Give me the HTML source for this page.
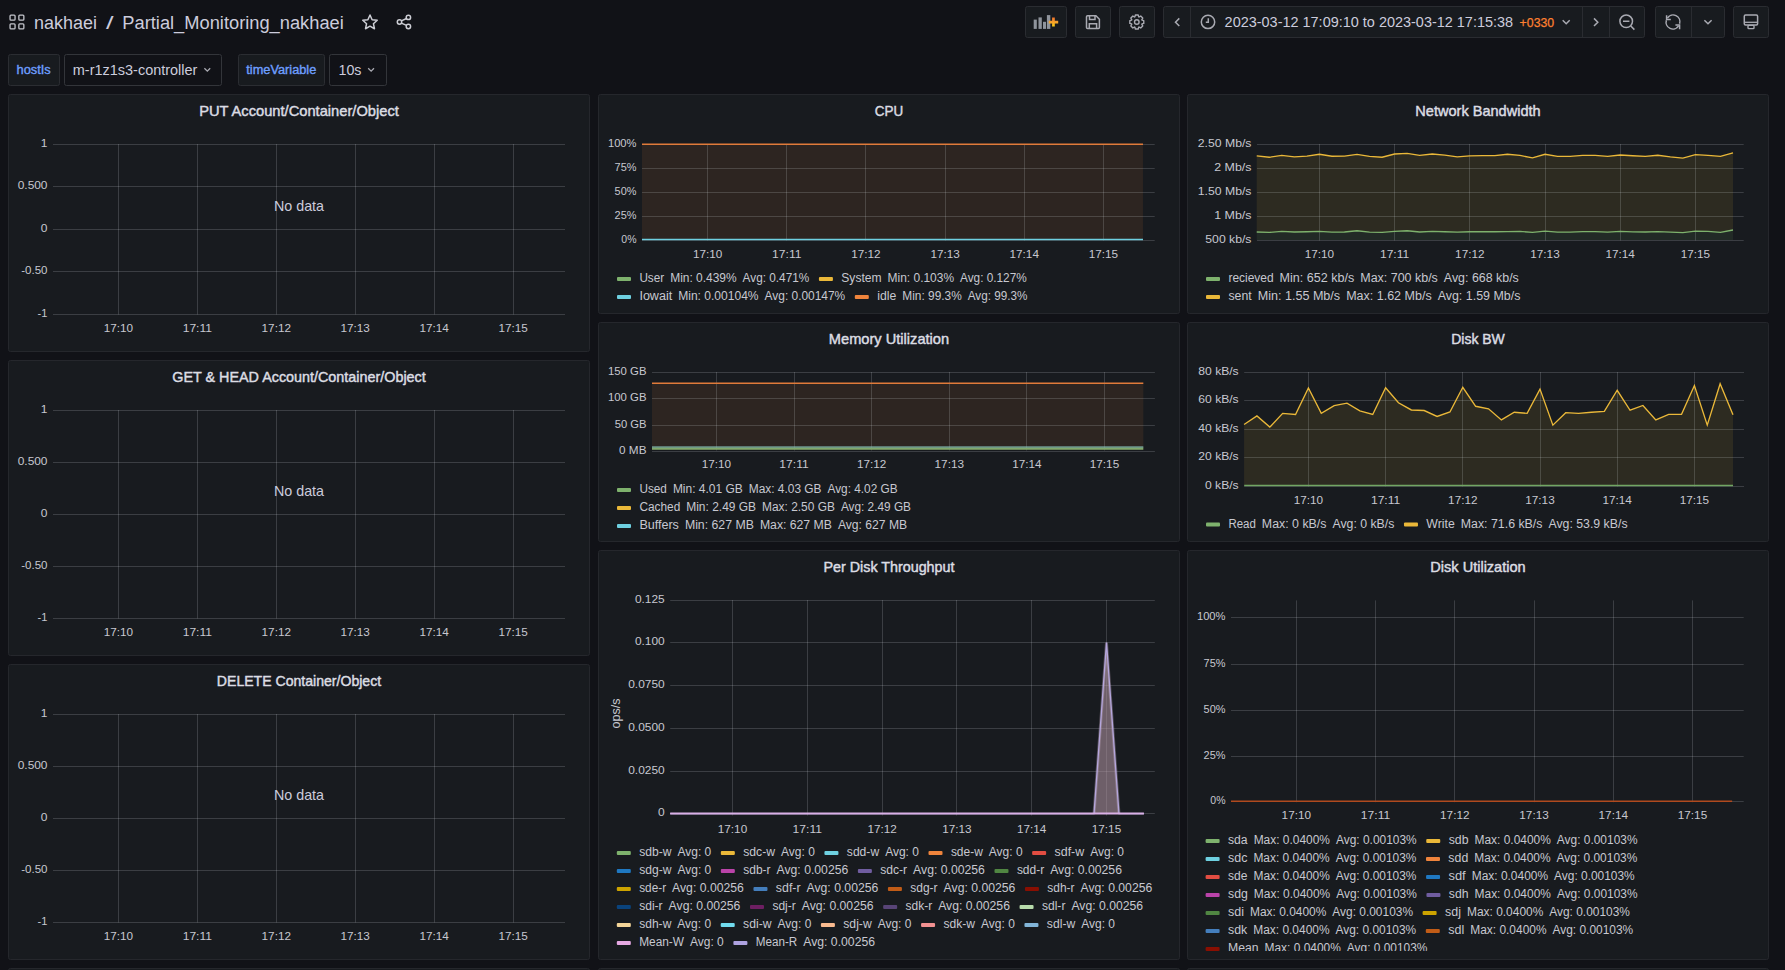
<!DOCTYPE html>
<html><head><meta charset="utf-8"><title>Partial_Monitoring_nakhaei - Grafana</title>
<style>html,body{margin:0;padding:0;background:#111217;overflow:hidden}svg{display:block}text{font-family:"Liberation Sans",sans-serif;white-space:pre}</style>
</head><body>
<svg width="1785" height="970" viewBox="0 0 1785 970">
<rect width="1785" height="970" fill="#111217"/>
<rect x="10.05" y="15.15" width="5.0" height="5.0" rx="0.9" fill="none" stroke="#c4c5cc" stroke-width="1.3"/>
<rect x="18.849999999999998" y="15.15" width="5.0" height="5.0" rx="0.9" fill="none" stroke="#c4c5cc" stroke-width="1.3"/>
<rect x="10.05" y="23.95" width="5.0" height="5.0" rx="0.9" fill="none" stroke="#c4c5cc" stroke-width="1.3"/>
<rect x="18.849999999999998" y="23.95" width="5.0" height="5.0" rx="0.9" fill="none" stroke="#c4c5cc" stroke-width="1.3"/>
<text x="34.00" y="29.40" font-size="18" fill="#ccccdc" text-anchor="start" textLength="63.00" lengthAdjust="spacingAndGlyphs" >nakhaei</text>
<text x="106.00" y="29.40" font-size="18" fill="#ccccdc" text-anchor="start" textLength="7.60" lengthAdjust="spacingAndGlyphs" >/</text>
<text x="122.30" y="29.40" font-size="18" fill="#ccccdc" text-anchor="start" textLength="221.50" lengthAdjust="spacingAndGlyphs" >Partial_Monitoring_nakhaei</text>
<polygon points="370.00,15.00 372.12,19.69 377.23,20.25 373.42,23.71 374.47,28.75 370.00,26.20 365.53,28.75 366.58,23.71 362.77,20.25 367.88,19.69" fill="none" stroke="#cdced5" stroke-width="1.5" stroke-linejoin="round"/>
<g fill="none" stroke="#cdced5" stroke-width="1.5"><circle cx="408.4" cy="17.4" r="2.2"/><circle cx="408.4" cy="26.5" r="2.2"/><circle cx="399.5" cy="22" r="2.2"/><line x1="401.4" y1="20.9" x2="406.5" y2="18.5"/><line x1="401.4" y1="23.1" x2="406.5" y2="25.4"/></g>
<rect x="1025.5" y="6.5" width="41" height="31" rx="2" fill="#181b1f" stroke="#2a2c31" stroke-width="1"/>
<rect x="1075.5" y="6.5" width="35" height="31" rx="2" fill="#181b1f" stroke="#2a2c31" stroke-width="1"/>
<rect x="1119.5" y="6.5" width="35" height="31" rx="2" fill="#181b1f" stroke="#2a2c31" stroke-width="1"/>
<rect x="1163.5" y="6.5" width="481" height="31" rx="2" fill="#181b1f" stroke="#2a2c31" stroke-width="1"/>
<rect x="1655.5" y="6.5" width="69" height="31" rx="2" fill="#181b1f" stroke="#2a2c31" stroke-width="1"/>
<rect x="1733.5" y="6.5" width="35" height="31" rx="2" fill="#181b1f" stroke="#2a2c31" stroke-width="1"/>
<line x1="1190.5" y1="6.5" x2="1190.5" y2="37.5" stroke="#2a2c31" stroke-width="1"/>
<line x1="1582.5" y1="6.5" x2="1582.5" y2="37.5" stroke="#2a2c31" stroke-width="1"/>
<line x1="1609.5" y1="6.5" x2="1609.5" y2="37.5" stroke="#2a2c31" stroke-width="1"/>
<line x1="1691.5" y1="6.5" x2="1691.5" y2="37.5" stroke="#2a2c31" stroke-width="1"/>
<rect x="1033.7" y="19.6" width="3.099999999999909" height="9.299999999999997" fill="#8f949c"/>
<rect x="1038.5" y="17.4" width="3.2999999999999545" height="11.5" fill="#8f949c"/>
<rect x="1043" y="21.8" width="3" height="7.099999999999998" fill="#8f949c"/>
<rect x="1046.9" y="15.1" width="3.3999999999998636" height="13.799999999999999" fill="#8f949c"/>
<defs><linearGradient id="plg" x1="0" y1="0" x2="0" y2="1"><stop offset="0" stop-color="#F0702A"/><stop offset="0.5" stop-color="#F7A12C"/><stop offset="1" stop-color="#FBD014"/></linearGradient></defs>
<path d="M1052.1 17.4h2.7v3.3h3.4v2.7h-3.4v3.2h-2.7v-3.2h-3.3v-2.7h3.3z" fill="url(#plg)"/>
<path d="M1087.5 15.8h8.5l3.4 3.4v8.3q0 1-1 1h-10.9q-1 0-1-1v-10.7q0-1 1-1z" fill="none" stroke="#a9aab2" stroke-width="1.5" stroke-linejoin="round"/>
<path d="M1089.5 16v3.6h5.5v-3.6M1089.3 28.3v-4.6h7.3v4.6" fill="none" stroke="#a9aab2" stroke-width="1.5"/>
<polygon points="1143.76,20.59 1143.76,23.41 1141.95,23.94 1141.81,24.27 1142.72,25.92 1140.72,27.92 1139.07,27.01 1138.74,27.15 1138.21,28.96 1135.39,28.96 1134.86,27.15 1134.53,27.01 1132.88,27.92 1130.88,25.92 1131.79,24.27 1131.65,23.94 1129.84,23.41 1129.84,20.59 1131.65,20.06 1131.79,19.73 1130.88,18.08 1132.88,16.08 1134.53,16.99 1134.86,16.85 1135.39,15.04 1138.21,15.04 1138.74,16.85 1139.07,16.99 1140.72,16.08 1142.72,18.08 1141.81,19.73 1141.95,20.06" fill="none" stroke="#a9aab2" stroke-width="1.4" stroke-linejoin="round"/>
<circle cx="1136.8" cy="22" r="2.3" fill="none" stroke="#a9aab2" stroke-width="1.4"/>
<path d="M1179.3 18.4l-3.8 3.8 3.8 3.8" fill="none" stroke="#a9aab2" stroke-width="1.5"/>
<circle cx="1208" cy="21.9" r="6.7" fill="none" stroke="#a9aab2" stroke-width="1.5"/><path d="M1208.3 18.2v4.1h-2.5" fill="none" stroke="#a9aab2" stroke-width="1.5"/>
<text x="1224.60" y="26.90" font-size="14" fill="#ccccdc" text-anchor="start" textLength="288.50" lengthAdjust="spacingAndGlyphs" >2023-03-12 17:09:10 to 2023-03-12 17:15:38</text>
<text x="1519.60" y="26.50" font-size="12.8" fill="#FF8030" stroke="#FF8030" stroke-width="0.25" text-anchor="start" textLength="34.60" lengthAdjust="spacingAndGlyphs" >+0330</text>
<path d="M1562.7 20.3l3.5 3.5 3.5-3.5" fill="none" stroke="#a9aab2" stroke-width="1.5"/>
<path d="M1594 18.4l3.8 3.8-3.8 3.8" fill="none" stroke="#a9aab2" stroke-width="1.5"/>
<circle cx="1626.2" cy="21.3" r="6.3" fill="none" stroke="#a9aab2" stroke-width="1.5"/><path d="M1623 21.3h6.4M1630.8 26l3.6 3.6" fill="none" stroke="#a9aab2" stroke-width="1.5"/>
<path d="M1667.4 18.1A6.8 6.8 0 0 1 1679.6 23.8M1678.6 25.9A6.8 6.8 0 0 1 1666.4 20.2" fill="none" stroke="#a9aab2" stroke-width="1.5"/>
<path d="M1666.6 15.2v4.2h4.2M1679.6 29.2v-4.3h-4.2" fill="none" stroke="#a9aab2" stroke-width="1.5"/>
<path d="M1704.4 20.2l3.6 3.6 3.6-3.6" fill="none" stroke="#a9aab2" stroke-width="1.5"/>
<rect x="1744.3" y="15" width="13.3" height="10" rx="1.2" fill="none" stroke="#a9aab2" stroke-width="1.5"/><path d="M1744.5 22.3h13" stroke="#a9aab2" stroke-width="1.3"/><rect x="1748" y="25.4" width="6" height="3.2" rx="0.8" fill="none" stroke="#a9aab2" stroke-width="1.4"/>
<rect x="8.5" y="54.5" width="51" height="31" rx="2" fill="#181b1f" stroke="#2b2d32" stroke-width="1"/>
<text x="16.50" y="74.20" font-size="12" fill="#6E9FFF" stroke="#6E9FFF" stroke-width="0.35" text-anchor="start" textLength="34.20" lengthAdjust="spacingAndGlyphs" >hostIs</text>
<rect x="64.5" y="54.5" width="157" height="31" rx="2" fill="#111217" stroke="#33353a" stroke-width="1"/>
<text x="72.80" y="74.80" font-size="14" fill="#ccccdc" text-anchor="start" textLength="124.60" lengthAdjust="spacingAndGlyphs" >m-r1z1s3-controller</text>
<path d="M204.4 68.2l2.9 2.9 2.9-2.9" fill="none" stroke="#a9aab2" stroke-width="1.3"/>
<rect x="238.5" y="54.5" width="86" height="31" rx="2" fill="#181b1f" stroke="#2b2d32" stroke-width="1"/>
<text x="246.30" y="74.20" font-size="12" fill="#6E9FFF" stroke="#6E9FFF" stroke-width="0.35" text-anchor="start" textLength="70.00" lengthAdjust="spacingAndGlyphs" >timeVariable</text>
<rect x="329.5" y="54.5" width="57" height="31" rx="2" fill="#111217" stroke="#33353a" stroke-width="1"/>
<text x="338.50" y="74.80" font-size="14" fill="#ccccdc" text-anchor="start" textLength="23.00" lengthAdjust="spacingAndGlyphs" >10s</text>
<path d="M368.2 68.2l2.9 2.9 2.9-2.9" fill="none" stroke="#a9aab2" stroke-width="1.3"/>
<rect x="8.5" y="94.5" width="581" height="257" rx="2" fill="#181b1f" stroke="#25272c" stroke-width="1"/>
<text x="299.00" y="116.00" font-size="15" fill="#dcdde3" stroke="#dcdde3" stroke-width="0.45" text-anchor="middle" textLength="199.62" lengthAdjust="spacingAndGlyphs" >PUT Account/Container/Object</text>
<line x1="53" y1="144.5" x2="565" y2="144.5" stroke="rgba(240,250,255,0.16)" stroke-width="1"/>
<text x="47.50" y="146.70" font-size="11.5" fill="#c7c8d0" text-anchor="end" textLength="6.68" lengthAdjust="spacingAndGlyphs" >1</text>
<line x1="53" y1="186.5" x2="565" y2="186.5" stroke="rgba(240,250,255,0.16)" stroke-width="1"/>
<text x="47.50" y="188.70" font-size="11.5" fill="#c7c8d0" text-anchor="end" textLength="29.79" lengthAdjust="spacingAndGlyphs" >0.500</text>
<line x1="53" y1="229.5" x2="565" y2="229.5" stroke="rgba(240,250,255,0.16)" stroke-width="1"/>
<text x="47.50" y="231.70" font-size="11.5" fill="#c7c8d0" text-anchor="end" textLength="6.68" lengthAdjust="spacingAndGlyphs" >0</text>
<line x1="53" y1="271.5" x2="565" y2="271.5" stroke="rgba(240,250,255,0.16)" stroke-width="1"/>
<text x="47.50" y="273.70" font-size="11.5" fill="#c7c8d0" text-anchor="end" textLength="26.32" lengthAdjust="spacingAndGlyphs" >-0.50</text>
<line x1="53" y1="314.5" x2="565" y2="314.5" stroke="rgba(240,250,255,0.16)" stroke-width="1"/>
<text x="47.50" y="316.70" font-size="11.5" fill="#c7c8d0" text-anchor="end" textLength="9.89" lengthAdjust="spacingAndGlyphs" >-1</text>
<line x1="118.5" y1="144" x2="118.5" y2="314.5" stroke="rgba(240,250,255,0.16)" stroke-width="1"/>
<text x="118.40" y="331.70" font-size="11.5" fill="#c7c8d0" text-anchor="middle" textLength="29.36" lengthAdjust="spacingAndGlyphs" >17:10</text>
<line x1="197.5" y1="144" x2="197.5" y2="314.5" stroke="rgba(240,250,255,0.16)" stroke-width="1"/>
<text x="197.34" y="331.70" font-size="11.5" fill="#c7c8d0" text-anchor="middle" textLength="29.36" lengthAdjust="spacingAndGlyphs" >17:11</text>
<line x1="276.5" y1="144" x2="276.5" y2="314.5" stroke="rgba(240,250,255,0.16)" stroke-width="1"/>
<text x="276.28" y="331.70" font-size="11.5" fill="#c7c8d0" text-anchor="middle" textLength="29.36" lengthAdjust="spacingAndGlyphs" >17:12</text>
<line x1="355.5" y1="144" x2="355.5" y2="314.5" stroke="rgba(240,250,255,0.16)" stroke-width="1"/>
<text x="355.22" y="331.70" font-size="11.5" fill="#c7c8d0" text-anchor="middle" textLength="29.36" lengthAdjust="spacingAndGlyphs" >17:13</text>
<line x1="434.5" y1="144" x2="434.5" y2="314.5" stroke="rgba(240,250,255,0.16)" stroke-width="1"/>
<text x="434.16" y="331.70" font-size="11.5" fill="#c7c8d0" text-anchor="middle" textLength="29.36" lengthAdjust="spacingAndGlyphs" >17:14</text>
<line x1="513.5" y1="144" x2="513.5" y2="314.5" stroke="rgba(240,250,255,0.16)" stroke-width="1"/>
<text x="513.10" y="331.70" font-size="11.5" fill="#c7c8d0" text-anchor="middle" textLength="29.36" lengthAdjust="spacingAndGlyphs" >17:15</text>
<text x="299.00" y="210.80" font-size="14.4" fill="#ccccdc" text-anchor="middle" textLength="50.00" lengthAdjust="spacingAndGlyphs" >No data</text>
<rect x="8.5" y="360.5" width="581" height="295" rx="2" fill="#181b1f" stroke="#25272c" stroke-width="1"/>
<text x="299.00" y="382.00" font-size="15" fill="#dcdde3" stroke="#dcdde3" stroke-width="0.45" text-anchor="middle" textLength="253.46" lengthAdjust="spacingAndGlyphs" >GET &amp; HEAD Account/Container/Object</text>
<line x1="53" y1="410.5" x2="565" y2="410.5" stroke="rgba(240,250,255,0.16)" stroke-width="1"/>
<text x="47.50" y="412.70" font-size="11.5" fill="#c7c8d0" text-anchor="end" textLength="6.68" lengthAdjust="spacingAndGlyphs" >1</text>
<line x1="53" y1="462.5" x2="565" y2="462.5" stroke="rgba(240,250,255,0.16)" stroke-width="1"/>
<text x="47.50" y="464.70" font-size="11.5" fill="#c7c8d0" text-anchor="end" textLength="29.79" lengthAdjust="spacingAndGlyphs" >0.500</text>
<line x1="53" y1="514.5" x2="565" y2="514.5" stroke="rgba(240,250,255,0.16)" stroke-width="1"/>
<text x="47.50" y="516.70" font-size="11.5" fill="#c7c8d0" text-anchor="end" textLength="6.68" lengthAdjust="spacingAndGlyphs" >0</text>
<line x1="53" y1="566.5" x2="565" y2="566.5" stroke="rgba(240,250,255,0.16)" stroke-width="1"/>
<text x="47.50" y="568.70" font-size="11.5" fill="#c7c8d0" text-anchor="end" textLength="26.32" lengthAdjust="spacingAndGlyphs" >-0.50</text>
<line x1="53" y1="618.5" x2="565" y2="618.5" stroke="rgba(240,250,255,0.16)" stroke-width="1"/>
<text x="47.50" y="620.70" font-size="11.5" fill="#c7c8d0" text-anchor="end" textLength="9.89" lengthAdjust="spacingAndGlyphs" >-1</text>
<line x1="118.5" y1="410" x2="118.5" y2="618.5" stroke="rgba(240,250,255,0.16)" stroke-width="1"/>
<text x="118.40" y="635.70" font-size="11.5" fill="#c7c8d0" text-anchor="middle" textLength="29.36" lengthAdjust="spacingAndGlyphs" >17:10</text>
<line x1="197.5" y1="410" x2="197.5" y2="618.5" stroke="rgba(240,250,255,0.16)" stroke-width="1"/>
<text x="197.34" y="635.70" font-size="11.5" fill="#c7c8d0" text-anchor="middle" textLength="29.36" lengthAdjust="spacingAndGlyphs" >17:11</text>
<line x1="276.5" y1="410" x2="276.5" y2="618.5" stroke="rgba(240,250,255,0.16)" stroke-width="1"/>
<text x="276.28" y="635.70" font-size="11.5" fill="#c7c8d0" text-anchor="middle" textLength="29.36" lengthAdjust="spacingAndGlyphs" >17:12</text>
<line x1="355.5" y1="410" x2="355.5" y2="618.5" stroke="rgba(240,250,255,0.16)" stroke-width="1"/>
<text x="355.22" y="635.70" font-size="11.5" fill="#c7c8d0" text-anchor="middle" textLength="29.36" lengthAdjust="spacingAndGlyphs" >17:13</text>
<line x1="434.5" y1="410" x2="434.5" y2="618.5" stroke="rgba(240,250,255,0.16)" stroke-width="1"/>
<text x="434.16" y="635.70" font-size="11.5" fill="#c7c8d0" text-anchor="middle" textLength="29.36" lengthAdjust="spacingAndGlyphs" >17:14</text>
<line x1="513.5" y1="410" x2="513.5" y2="618.5" stroke="rgba(240,250,255,0.16)" stroke-width="1"/>
<text x="513.10" y="635.70" font-size="11.5" fill="#c7c8d0" text-anchor="middle" textLength="29.36" lengthAdjust="spacingAndGlyphs" >17:15</text>
<text x="299.00" y="495.80" font-size="14.4" fill="#ccccdc" text-anchor="middle" textLength="50.00" lengthAdjust="spacingAndGlyphs" >No data</text>
<rect x="8.5" y="664.5" width="581" height="295" rx="2" fill="#181b1f" stroke="#25272c" stroke-width="1"/>
<text x="299.00" y="686.00" font-size="15" fill="#dcdde3" stroke="#dcdde3" stroke-width="0.45" text-anchor="middle" textLength="164.26" lengthAdjust="spacingAndGlyphs" >DELETE Container/Object</text>
<line x1="53" y1="714.5" x2="565" y2="714.5" stroke="rgba(240,250,255,0.16)" stroke-width="1"/>
<text x="47.50" y="716.70" font-size="11.5" fill="#c7c8d0" text-anchor="end" textLength="6.68" lengthAdjust="spacingAndGlyphs" >1</text>
<line x1="53" y1="766.5" x2="565" y2="766.5" stroke="rgba(240,250,255,0.16)" stroke-width="1"/>
<text x="47.50" y="768.70" font-size="11.5" fill="#c7c8d0" text-anchor="end" textLength="29.79" lengthAdjust="spacingAndGlyphs" >0.500</text>
<line x1="53" y1="818.5" x2="565" y2="818.5" stroke="rgba(240,250,255,0.16)" stroke-width="1"/>
<text x="47.50" y="820.70" font-size="11.5" fill="#c7c8d0" text-anchor="end" textLength="6.68" lengthAdjust="spacingAndGlyphs" >0</text>
<line x1="53" y1="870.5" x2="565" y2="870.5" stroke="rgba(240,250,255,0.16)" stroke-width="1"/>
<text x="47.50" y="872.70" font-size="11.5" fill="#c7c8d0" text-anchor="end" textLength="26.32" lengthAdjust="spacingAndGlyphs" >-0.50</text>
<line x1="53" y1="922.5" x2="565" y2="922.5" stroke="rgba(240,250,255,0.16)" stroke-width="1"/>
<text x="47.50" y="924.70" font-size="11.5" fill="#c7c8d0" text-anchor="end" textLength="9.89" lengthAdjust="spacingAndGlyphs" >-1</text>
<line x1="118.5" y1="714" x2="118.5" y2="922.5" stroke="rgba(240,250,255,0.16)" stroke-width="1"/>
<text x="118.40" y="939.70" font-size="11.5" fill="#c7c8d0" text-anchor="middle" textLength="29.36" lengthAdjust="spacingAndGlyphs" >17:10</text>
<line x1="197.5" y1="714" x2="197.5" y2="922.5" stroke="rgba(240,250,255,0.16)" stroke-width="1"/>
<text x="197.34" y="939.70" font-size="11.5" fill="#c7c8d0" text-anchor="middle" textLength="29.36" lengthAdjust="spacingAndGlyphs" >17:11</text>
<line x1="276.5" y1="714" x2="276.5" y2="922.5" stroke="rgba(240,250,255,0.16)" stroke-width="1"/>
<text x="276.28" y="939.70" font-size="11.5" fill="#c7c8d0" text-anchor="middle" textLength="29.36" lengthAdjust="spacingAndGlyphs" >17:12</text>
<line x1="355.5" y1="714" x2="355.5" y2="922.5" stroke="rgba(240,250,255,0.16)" stroke-width="1"/>
<text x="355.22" y="939.70" font-size="11.5" fill="#c7c8d0" text-anchor="middle" textLength="29.36" lengthAdjust="spacingAndGlyphs" >17:13</text>
<line x1="434.5" y1="714" x2="434.5" y2="922.5" stroke="rgba(240,250,255,0.16)" stroke-width="1"/>
<text x="434.16" y="939.70" font-size="11.5" fill="#c7c8d0" text-anchor="middle" textLength="29.36" lengthAdjust="spacingAndGlyphs" >17:14</text>
<line x1="513.5" y1="714" x2="513.5" y2="922.5" stroke="rgba(240,250,255,0.16)" stroke-width="1"/>
<text x="513.10" y="939.70" font-size="11.5" fill="#c7c8d0" text-anchor="middle" textLength="29.36" lengthAdjust="spacingAndGlyphs" >17:15</text>
<text x="299.00" y="799.80" font-size="14.4" fill="#ccccdc" text-anchor="middle" textLength="50.00" lengthAdjust="spacingAndGlyphs" >No data</text>
<rect x="8.5" y="968.5" width="581" height="39" rx="2" fill="#181b1f" stroke="#25272c" stroke-width="1"/>
<rect x="598.5" y="968.5" width="581" height="39" rx="2" fill="#181b1f" stroke="#25272c" stroke-width="1"/>
<rect x="1187.5" y="968.5" width="581" height="39" rx="2" fill="#181b1f" stroke="#25272c" stroke-width="1"/>
<rect x="598.5" y="94.5" width="581" height="219" rx="2" fill="#181b1f" stroke="#25272c" stroke-width="1"/>
<text x="889.00" y="116.00" font-size="15" fill="#dcdde3" stroke="#dcdde3" stroke-width="0.45" text-anchor="middle" textLength="28.37" lengthAdjust="spacingAndGlyphs" >CPU</text>
<rect x="642" y="144" width="500.98" height="96" fill="rgba(239,132,60,0.10)"/>
<line x1="642" y1="144.5" x2="1154.7" y2="144.5" stroke="rgba(240,250,255,0.16)" stroke-width="1"/>
<text x="636.50" y="146.70" font-size="11.5" fill="#c7c8d0" text-anchor="end" textLength="28.56" lengthAdjust="spacingAndGlyphs" >100%</text>
<line x1="642" y1="168.5" x2="1154.7" y2="168.5" stroke="rgba(240,250,255,0.16)" stroke-width="1"/>
<text x="636.50" y="170.70" font-size="11.5" fill="#c7c8d0" text-anchor="end" textLength="21.88" lengthAdjust="spacingAndGlyphs" >75%</text>
<line x1="642" y1="192.5" x2="1154.7" y2="192.5" stroke="rgba(240,250,255,0.16)" stroke-width="1"/>
<text x="636.50" y="194.70" font-size="11.5" fill="#c7c8d0" text-anchor="end" textLength="21.88" lengthAdjust="spacingAndGlyphs" >50%</text>
<line x1="642" y1="216.5" x2="1154.7" y2="216.5" stroke="rgba(240,250,255,0.16)" stroke-width="1"/>
<text x="636.50" y="218.70" font-size="11.5" fill="#c7c8d0" text-anchor="end" textLength="21.88" lengthAdjust="spacingAndGlyphs" >25%</text>
<line x1="642" y1="240.5" x2="1154.7" y2="240.5" stroke="rgba(240,250,255,0.16)" stroke-width="1"/>
<text x="636.50" y="242.70" font-size="11.5" fill="#c7c8d0" text-anchor="end" textLength="15.19" lengthAdjust="spacingAndGlyphs" >0%</text>
<line x1="707.5" y1="144" x2="707.5" y2="240.5" stroke="rgba(240,250,255,0.16)" stroke-width="1"/>
<text x="707.60" y="257.70" font-size="11.5" fill="#c7c8d0" text-anchor="middle" textLength="29.36" lengthAdjust="spacingAndGlyphs" >17:10</text>
<line x1="786.5" y1="144" x2="786.5" y2="240.5" stroke="rgba(240,250,255,0.16)" stroke-width="1"/>
<text x="786.76" y="257.70" font-size="11.5" fill="#c7c8d0" text-anchor="middle" textLength="29.36" lengthAdjust="spacingAndGlyphs" >17:11</text>
<line x1="865.5" y1="144" x2="865.5" y2="240.5" stroke="rgba(240,250,255,0.16)" stroke-width="1"/>
<text x="865.92" y="257.70" font-size="11.5" fill="#c7c8d0" text-anchor="middle" textLength="29.36" lengthAdjust="spacingAndGlyphs" >17:12</text>
<line x1="945.5" y1="144" x2="945.5" y2="240.5" stroke="rgba(240,250,255,0.16)" stroke-width="1"/>
<text x="945.08" y="257.70" font-size="11.5" fill="#c7c8d0" text-anchor="middle" textLength="29.36" lengthAdjust="spacingAndGlyphs" >17:13</text>
<line x1="1024.5" y1="144" x2="1024.5" y2="240.5" stroke="rgba(240,250,255,0.16)" stroke-width="1"/>
<text x="1024.24" y="257.70" font-size="11.5" fill="#c7c8d0" text-anchor="middle" textLength="29.36" lengthAdjust="spacingAndGlyphs" >17:14</text>
<line x1="1103.5" y1="144" x2="1103.5" y2="240.5" stroke="rgba(240,250,255,0.16)" stroke-width="1"/>
<text x="1103.40" y="257.70" font-size="11.5" fill="#c7c8d0" text-anchor="middle" textLength="29.36" lengthAdjust="spacingAndGlyphs" >17:15</text>
<line x1="642" y1="144.2" x2="1142.98" y2="144.2" stroke="#E07B3A" stroke-width="1.6"/>
<line x1="642" y1="239.5" x2="1142.98" y2="239.5" stroke="#6ED0E0" stroke-width="1.3"/>
<rect x="617.00" y="277" width="14" height="4" rx="1" fill="#7EB26D"/>
<text x="639.40" y="282.20" font-size="12" fill="#c7c8d0" text-anchor="start" textLength="24.78" lengthAdjust="spacingAndGlyphs" >User</text>
<text x="670.18" y="282.20" font-size="12" fill="#c7c8d0" text-anchor="start" textLength="66.42" lengthAdjust="spacingAndGlyphs" >Min: 0.439%</text>
<text x="742.60" y="282.20" font-size="12" fill="#c7c8d0" text-anchor="start" textLength="66.72" lengthAdjust="spacingAndGlyphs" >Avg: 0.471%</text>
<rect x="818.92" y="277" width="14" height="4" rx="1" fill="#EAB839"/>
<text x="841.32" y="282.20" font-size="12" fill="#c7c8d0" text-anchor="start" textLength="40.29" lengthAdjust="spacingAndGlyphs" >System</text>
<text x="887.61" y="282.20" font-size="12" fill="#c7c8d0" text-anchor="start" textLength="66.42" lengthAdjust="spacingAndGlyphs" >Min: 0.103%</text>
<text x="960.03" y="282.20" font-size="12" fill="#c7c8d0" text-anchor="start" textLength="66.72" lengthAdjust="spacingAndGlyphs" >Avg: 0.127%</text>
<rect x="617.00" y="295" width="14" height="4" rx="1" fill="#6ED0E0"/>
<text x="639.40" y="300.20" font-size="12" fill="#c7c8d0" text-anchor="start" textLength="32.83" lengthAdjust="spacingAndGlyphs" >Iowait</text>
<text x="678.23" y="300.20" font-size="12" fill="#c7c8d0" text-anchor="start" textLength="80.35" lengthAdjust="spacingAndGlyphs" >Min: 0.00104%</text>
<text x="764.58" y="300.20" font-size="12" fill="#c7c8d0" text-anchor="start" textLength="80.64" lengthAdjust="spacingAndGlyphs" >Avg: 0.00147%</text>
<rect x="854.82" y="295" width="14" height="4" rx="1" fill="#EF843C"/>
<text x="877.22" y="300.20" font-size="12" fill="#c7c8d0" text-anchor="start" textLength="19.08" lengthAdjust="spacingAndGlyphs" >idle</text>
<text x="902.31" y="300.20" font-size="12" fill="#c7c8d0" text-anchor="start" textLength="59.46" lengthAdjust="spacingAndGlyphs" >Min: 99.3%</text>
<text x="967.76" y="300.20" font-size="12" fill="#c7c8d0" text-anchor="start" textLength="59.75" lengthAdjust="spacingAndGlyphs" >Avg: 99.3%</text>
<rect x="1187.5" y="94.5" width="581" height="219" rx="2" fill="#181b1f" stroke="#25272c" stroke-width="1"/>
<text x="1478.00" y="116.00" font-size="15" fill="#dcdde3" stroke="#dcdde3" stroke-width="0.45" text-anchor="middle" textLength="125.34" lengthAdjust="spacingAndGlyphs" >Network Bandwidth</text>
<polygon points="1256.73,155.83 1269.27,157.23 1281.80,155.41 1294.33,156.81 1306.87,156.11 1319.40,154.29 1331.93,156.25 1344.47,156.11 1357.00,154.43 1369.53,156.39 1382.07,157.23 1394.60,154.01 1407.13,153.31 1419.67,155.41 1432.20,154.01 1444.73,155.13 1457.27,156.81 1469.80,155.83 1482.33,155.55 1494.87,155.55 1507.40,154.29 1519.93,155.43 1532.47,157.86 1545.00,154.29 1557.53,156.43 1570.07,156.43 1582.60,155.43 1595.13,155.43 1607.67,156.43 1620.20,155.00 1632.73,155.71 1645.27,156.43 1657.80,155.29 1670.33,156.86 1682.87,158.14 1695.40,154.57 1707.93,155.43 1720.47,156.43 1733.00,152.86 1733.00,230.00 1720.47,232.29 1707.93,231.43 1695.40,231.14 1682.87,232.57 1670.33,232.14 1657.80,231.57 1645.27,232.00 1632.73,231.86 1620.20,231.43 1607.67,232.14 1595.13,231.71 1582.60,231.71 1570.07,232.14 1557.53,232.14 1545.00,231.14 1532.47,232.43 1519.93,231.43 1507.40,231.71 1494.87,231.74 1482.33,231.74 1469.80,231.74 1457.27,232.16 1444.73,231.74 1432.20,231.32 1419.67,232.02 1407.13,230.76 1394.60,231.32 1382.07,232.44 1369.53,232.16 1357.00,230.76 1344.47,232.02 1331.93,232.16 1319.40,231.32 1306.87,231.74 1294.33,232.02 1281.80,231.46 1269.27,232.44 1256.73,232.02" fill="rgba(234,184,57,0.10)"/>
<polygon points="1256.73,232.02 1269.27,232.44 1281.80,231.46 1294.33,232.02 1306.87,231.74 1319.40,231.32 1331.93,232.16 1344.47,232.02 1357.00,230.76 1369.53,232.16 1382.07,232.44 1394.60,231.32 1407.13,230.76 1419.67,232.02 1432.20,231.32 1444.73,231.74 1457.27,232.16 1469.80,231.74 1482.33,231.74 1494.87,231.74 1507.40,231.71 1519.93,231.43 1532.47,232.43 1545.00,231.14 1557.53,232.14 1570.07,232.14 1582.60,231.71 1595.13,231.71 1607.67,232.14 1620.20,231.43 1632.73,231.86 1645.27,232.00 1657.80,231.57 1670.33,232.14 1682.87,232.57 1695.40,231.14 1707.93,231.43 1720.47,232.29 1733.00,230.00 1733.00,240 1256.73,240" fill="rgba(126,178,109,0.10)"/>
<line x1="1257" y1="144.5" x2="1743.7" y2="144.5" stroke="rgba(240,250,255,0.16)" stroke-width="1"/>
<text x="1251.50" y="146.70" font-size="11.5" fill="#c7c8d0" text-anchor="end" textLength="53.74" lengthAdjust="spacingAndGlyphs" >2.50 Mb/s</text>
<line x1="1257" y1="168.5" x2="1743.7" y2="168.5" stroke="rgba(240,250,255,0.16)" stroke-width="1"/>
<text x="1251.50" y="170.70" font-size="11.5" fill="#c7c8d0" text-anchor="end" textLength="37.31" lengthAdjust="spacingAndGlyphs" >2 Mb/s</text>
<line x1="1257" y1="192.5" x2="1743.7" y2="192.5" stroke="rgba(240,250,255,0.16)" stroke-width="1"/>
<text x="1251.50" y="194.70" font-size="11.5" fill="#c7c8d0" text-anchor="end" textLength="53.74" lengthAdjust="spacingAndGlyphs" >1.50 Mb/s</text>
<line x1="1257" y1="216.5" x2="1743.7" y2="216.5" stroke="rgba(240,250,255,0.16)" stroke-width="1"/>
<text x="1251.50" y="218.70" font-size="11.5" fill="#c7c8d0" text-anchor="end" textLength="37.31" lengthAdjust="spacingAndGlyphs" >1 Mb/s</text>
<line x1="1257" y1="240.5" x2="1743.7" y2="240.5" stroke="rgba(240,250,255,0.16)" stroke-width="1"/>
<text x="1251.50" y="242.70" font-size="11.5" fill="#c7c8d0" text-anchor="end" textLength="46.18" lengthAdjust="spacingAndGlyphs" >500 kb/s</text>
<line x1="1319.5" y1="144" x2="1319.5" y2="240.5" stroke="rgba(240,250,255,0.16)" stroke-width="1"/>
<text x="1319.40" y="257.70" font-size="11.5" fill="#c7c8d0" text-anchor="middle" textLength="29.36" lengthAdjust="spacingAndGlyphs" >17:10</text>
<line x1="1394.5" y1="144" x2="1394.5" y2="240.5" stroke="rgba(240,250,255,0.16)" stroke-width="1"/>
<text x="1394.60" y="257.70" font-size="11.5" fill="#c7c8d0" text-anchor="middle" textLength="29.36" lengthAdjust="spacingAndGlyphs" >17:11</text>
<line x1="1469.5" y1="144" x2="1469.5" y2="240.5" stroke="rgba(240,250,255,0.16)" stroke-width="1"/>
<text x="1469.80" y="257.70" font-size="11.5" fill="#c7c8d0" text-anchor="middle" textLength="29.36" lengthAdjust="spacingAndGlyphs" >17:12</text>
<line x1="1545.5" y1="144" x2="1545.5" y2="240.5" stroke="rgba(240,250,255,0.16)" stroke-width="1"/>
<text x="1545.00" y="257.70" font-size="11.5" fill="#c7c8d0" text-anchor="middle" textLength="29.36" lengthAdjust="spacingAndGlyphs" >17:13</text>
<line x1="1620.5" y1="144" x2="1620.5" y2="240.5" stroke="rgba(240,250,255,0.16)" stroke-width="1"/>
<text x="1620.20" y="257.70" font-size="11.5" fill="#c7c8d0" text-anchor="middle" textLength="29.36" lengthAdjust="spacingAndGlyphs" >17:14</text>
<line x1="1695.5" y1="144" x2="1695.5" y2="240.5" stroke="rgba(240,250,255,0.16)" stroke-width="1"/>
<text x="1695.40" y="257.70" font-size="11.5" fill="#c7c8d0" text-anchor="middle" textLength="29.36" lengthAdjust="spacingAndGlyphs" >17:15</text>
<polyline points="1256.73,232.02 1269.27,232.44 1281.80,231.46 1294.33,232.02 1306.87,231.74 1319.40,231.32 1331.93,232.16 1344.47,232.02 1357.00,230.76 1369.53,232.16 1382.07,232.44 1394.60,231.32 1407.13,230.76 1419.67,232.02 1432.20,231.32 1444.73,231.74 1457.27,232.16 1469.80,231.74 1482.33,231.74 1494.87,231.74 1507.40,231.71 1519.93,231.43 1532.47,232.43 1545.00,231.14 1557.53,232.14 1570.07,232.14 1582.60,231.71 1595.13,231.71 1607.67,232.14 1620.20,231.43 1632.73,231.86 1645.27,232.00 1657.80,231.57 1670.33,232.14 1682.87,232.57 1695.40,231.14 1707.93,231.43 1720.47,232.29 1733.00,230.00" fill="none" stroke="#7EB26D" stroke-width="1.3"/>
<polyline points="1256.73,155.83 1269.27,157.23 1281.80,155.41 1294.33,156.81 1306.87,156.11 1319.40,154.29 1331.93,156.25 1344.47,156.11 1357.00,154.43 1369.53,156.39 1382.07,157.23 1394.60,154.01 1407.13,153.31 1419.67,155.41 1432.20,154.01 1444.73,155.13 1457.27,156.81 1469.80,155.83 1482.33,155.55 1494.87,155.55 1507.40,154.29 1519.93,155.43 1532.47,157.86 1545.00,154.29 1557.53,156.43 1570.07,156.43 1582.60,155.43 1595.13,155.43 1607.67,156.43 1620.20,155.00 1632.73,155.71 1645.27,156.43 1657.80,155.29 1670.33,156.86 1682.87,158.14 1695.40,154.57 1707.93,155.43 1720.47,156.43 1733.00,152.86" fill="none" stroke="#EAB839" stroke-width="1.35"/>
<rect x="1206.00" y="277" width="14" height="4" rx="1" fill="#7EB26D"/>
<text x="1228.40" y="282.20" font-size="12" fill="#c7c8d0" text-anchor="start" textLength="45.23" lengthAdjust="spacingAndGlyphs" >recieved</text>
<text x="1279.63" y="282.20" font-size="12" fill="#c7c8d0" text-anchor="start" textLength="74.62" lengthAdjust="spacingAndGlyphs" >Min: 652 kb/s</text>
<text x="1360.26" y="282.20" font-size="12" fill="#c7c8d0" text-anchor="start" textLength="77.61" lengthAdjust="spacingAndGlyphs" >Max: 700 kb/s</text>
<text x="1443.87" y="282.20" font-size="12" fill="#c7c8d0" text-anchor="start" textLength="74.92" lengthAdjust="spacingAndGlyphs" >Avg: 668 kb/s</text>
<rect x="1206.00" y="295" width="14" height="4" rx="1" fill="#EAB839"/>
<text x="1228.40" y="300.20" font-size="12" fill="#c7c8d0" text-anchor="start" textLength="23.26" lengthAdjust="spacingAndGlyphs" >sent</text>
<text x="1257.66" y="300.20" font-size="12" fill="#c7c8d0" text-anchor="start" textLength="82.50" lengthAdjust="spacingAndGlyphs" >Min: 1.55 Mb/s</text>
<text x="1346.16" y="300.20" font-size="12" fill="#c7c8d0" text-anchor="start" textLength="85.49" lengthAdjust="spacingAndGlyphs" >Max: 1.62 Mb/s</text>
<text x="1437.65" y="300.20" font-size="12" fill="#c7c8d0" text-anchor="start" textLength="82.80" lengthAdjust="spacingAndGlyphs" >Avg: 1.59 Mb/s</text>
<rect x="598.5" y="322.5" width="581" height="219" rx="2" fill="#181b1f" stroke="#25272c" stroke-width="1"/>
<text x="889.00" y="344.00" font-size="15" fill="#dcdde3" stroke="#dcdde3" stroke-width="0.45" text-anchor="middle" textLength="120.29" lengthAdjust="spacingAndGlyphs" >Memory Utilization</text>
<rect x="652" y="383.3" width="491.31" height="66.70" fill="rgba(239,132,60,0.10)"/>
<line x1="652" y1="372.5" x2="1154.9" y2="372.5" stroke="rgba(240,250,255,0.16)" stroke-width="1"/>
<text x="646.50" y="374.70" font-size="11.5" fill="#c7c8d0" text-anchor="end" textLength="38.51" lengthAdjust="spacingAndGlyphs" >150 GB</text>
<line x1="652" y1="398.5" x2="1154.9" y2="398.5" stroke="rgba(240,250,255,0.16)" stroke-width="1"/>
<text x="646.50" y="400.70" font-size="11.5" fill="#c7c8d0" text-anchor="end" textLength="38.51" lengthAdjust="spacingAndGlyphs" >100 GB</text>
<line x1="652" y1="425.5" x2="1154.9" y2="425.5" stroke="rgba(240,250,255,0.16)" stroke-width="1"/>
<text x="646.50" y="427.70" font-size="11.5" fill="#c7c8d0" text-anchor="end" textLength="31.82" lengthAdjust="spacingAndGlyphs" >50 GB</text>
<line x1="652" y1="451.5" x2="1154.9" y2="451.5" stroke="rgba(240,250,255,0.16)" stroke-width="1"/>
<text x="646.50" y="453.70" font-size="11.5" fill="#c7c8d0" text-anchor="end" textLength="27.43" lengthAdjust="spacingAndGlyphs" >0 MB</text>
<line x1="716.5" y1="372" x2="716.5" y2="450.5" stroke="rgba(240,250,255,0.16)" stroke-width="1"/>
<text x="716.40" y="467.70" font-size="11.5" fill="#c7c8d0" text-anchor="middle" textLength="29.36" lengthAdjust="spacingAndGlyphs" >17:10</text>
<line x1="794.5" y1="372" x2="794.5" y2="450.5" stroke="rgba(240,250,255,0.16)" stroke-width="1"/>
<text x="794.02" y="467.70" font-size="11.5" fill="#c7c8d0" text-anchor="middle" textLength="29.36" lengthAdjust="spacingAndGlyphs" >17:11</text>
<line x1="871.5" y1="372" x2="871.5" y2="450.5" stroke="rgba(240,250,255,0.16)" stroke-width="1"/>
<text x="871.64" y="467.70" font-size="11.5" fill="#c7c8d0" text-anchor="middle" textLength="29.36" lengthAdjust="spacingAndGlyphs" >17:12</text>
<line x1="949.5" y1="372" x2="949.5" y2="450.5" stroke="rgba(240,250,255,0.16)" stroke-width="1"/>
<text x="949.26" y="467.70" font-size="11.5" fill="#c7c8d0" text-anchor="middle" textLength="29.36" lengthAdjust="spacingAndGlyphs" >17:13</text>
<line x1="1026.5" y1="372" x2="1026.5" y2="450.5" stroke="rgba(240,250,255,0.16)" stroke-width="1"/>
<text x="1026.88" y="467.70" font-size="11.5" fill="#c7c8d0" text-anchor="middle" textLength="29.36" lengthAdjust="spacingAndGlyphs" >17:14</text>
<line x1="1104.5" y1="372" x2="1104.5" y2="450.5" stroke="rgba(240,250,255,0.16)" stroke-width="1"/>
<text x="1104.50" y="467.70" font-size="11.5" fill="#c7c8d0" text-anchor="middle" textLength="29.36" lengthAdjust="spacingAndGlyphs" >17:15</text>
<line x1="652" y1="383.3" x2="1143.31" y2="383.3" stroke="#E07B3A" stroke-width="1.5"/>
<line x1="652" y1="448.6" x2="1143.31" y2="448.6" stroke="#7fa86c" stroke-width="2.4"/>
<line x1="652" y1="447" x2="1143.31" y2="447" stroke="#8ccdc4" stroke-width="1.1"/>
<rect x="617.00" y="488" width="14" height="4" rx="1" fill="#7EB26D"/>
<text x="639.40" y="493.20" font-size="12" fill="#c7c8d0" text-anchor="start" textLength="27.49" lengthAdjust="spacingAndGlyphs" >Used</text>
<text x="672.89" y="493.20" font-size="12" fill="#c7c8d0" text-anchor="start" textLength="69.82" lengthAdjust="spacingAndGlyphs" >Min: 4.01 GB</text>
<text x="748.72" y="493.20" font-size="12" fill="#c7c8d0" text-anchor="start" textLength="72.81" lengthAdjust="spacingAndGlyphs" >Max: 4.03 GB</text>
<text x="827.52" y="493.20" font-size="12" fill="#c7c8d0" text-anchor="start" textLength="70.12" lengthAdjust="spacingAndGlyphs" >Avg: 4.02 GB</text>
<rect x="617.00" y="506" width="14" height="4" rx="1" fill="#EAB839"/>
<text x="639.40" y="511.20" font-size="12" fill="#c7c8d0" text-anchor="start" textLength="40.86" lengthAdjust="spacingAndGlyphs" >Cached</text>
<text x="686.26" y="511.20" font-size="12" fill="#c7c8d0" text-anchor="start" textLength="69.82" lengthAdjust="spacingAndGlyphs" >Min: 2.49 GB</text>
<text x="762.08" y="511.20" font-size="12" fill="#c7c8d0" text-anchor="start" textLength="72.81" lengthAdjust="spacingAndGlyphs" >Max: 2.50 GB</text>
<text x="840.89" y="511.20" font-size="12" fill="#c7c8d0" text-anchor="start" textLength="70.12" lengthAdjust="spacingAndGlyphs" >Avg: 2.49 GB</text>
<rect x="617.00" y="524" width="14" height="4" rx="1" fill="#6ED0E0"/>
<text x="639.40" y="529.20" font-size="12" fill="#c7c8d0" text-anchor="start" textLength="39.50" lengthAdjust="spacingAndGlyphs" >Buffers</text>
<text x="684.90" y="529.20" font-size="12" fill="#c7c8d0" text-anchor="start" textLength="69.01" lengthAdjust="spacingAndGlyphs" >Min: 627 MB</text>
<text x="759.91" y="529.20" font-size="12" fill="#c7c8d0" text-anchor="start" textLength="72.00" lengthAdjust="spacingAndGlyphs" >Max: 627 MB</text>
<text x="837.91" y="529.20" font-size="12" fill="#c7c8d0" text-anchor="start" textLength="69.31" lengthAdjust="spacingAndGlyphs" >Avg: 627 MB</text>
<rect x="1187.5" y="322.5" width="581" height="219" rx="2" fill="#181b1f" stroke="#25272c" stroke-width="1"/>
<text x="1478.00" y="344.00" font-size="15" fill="#dcdde3" stroke="#dcdde3" stroke-width="0.45" text-anchor="middle" textLength="53.63" lengthAdjust="spacingAndGlyphs" >Disk BW</text>
<polygon points="1244.07,424.56 1256.93,415.92 1269.80,427.12 1282.67,413.37 1295.53,414.50 1308.40,387.99 1321.27,413.37 1334.13,405.57 1347.00,403.16 1359.87,410.81 1372.73,414.50 1385.60,387.71 1398.47,402.73 1411.33,409.96 1424.20,410.53 1437.07,416.48 1449.93,411.95 1462.80,387.28 1475.67,406.28 1488.53,408.83 1501.40,419.89 1514.27,412.23 1527.13,413.37 1540.00,389.13 1552.87,425.13 1565.73,412.66 1578.60,413.37 1591.47,412.23 1604.33,411.38 1617.20,390.26 1630.07,410.25 1642.93,405.43 1655.80,419.89 1668.67,414.36 1681.53,414.36 1694.40,385.58 1707.27,425.13 1720.13,383.74 1733.00,414.64 1733.00,485.8 1244.07,485.8" fill="rgba(234,184,57,0.10)"/>
<line x1="1244.2" y1="372.5" x2="1744" y2="372.5" stroke="rgba(240,250,255,0.16)" stroke-width="1"/>
<text x="1238.70" y="374.70" font-size="11.5" fill="#c7c8d0" text-anchor="end" textLength="40.39" lengthAdjust="spacingAndGlyphs" >80 kB/s</text>
<line x1="1244.2" y1="400.5" x2="1744" y2="400.5" stroke="rgba(240,250,255,0.16)" stroke-width="1"/>
<text x="1238.70" y="402.70" font-size="11.5" fill="#c7c8d0" text-anchor="end" textLength="40.39" lengthAdjust="spacingAndGlyphs" >60 kB/s</text>
<line x1="1244.2" y1="429.5" x2="1744" y2="429.5" stroke="rgba(240,250,255,0.16)" stroke-width="1"/>
<text x="1238.70" y="431.70" font-size="11.5" fill="#c7c8d0" text-anchor="end" textLength="40.39" lengthAdjust="spacingAndGlyphs" >40 kB/s</text>
<line x1="1244.2" y1="457.5" x2="1744" y2="457.5" stroke="rgba(240,250,255,0.16)" stroke-width="1"/>
<text x="1238.70" y="459.70" font-size="11.5" fill="#c7c8d0" text-anchor="end" textLength="40.39" lengthAdjust="spacingAndGlyphs" >20 kB/s</text>
<line x1="1244.2" y1="486.5" x2="1744" y2="486.5" stroke="rgba(240,250,255,0.16)" stroke-width="1"/>
<text x="1238.70" y="488.70" font-size="11.5" fill="#c7c8d0" text-anchor="end" textLength="33.71" lengthAdjust="spacingAndGlyphs" >0 kB/s</text>
<line x1="1308.5" y1="372" x2="1308.5" y2="486.5" stroke="rgba(240,250,255,0.16)" stroke-width="1"/>
<text x="1308.40" y="503.70" font-size="11.5" fill="#c7c8d0" text-anchor="middle" textLength="29.36" lengthAdjust="spacingAndGlyphs" >17:10</text>
<line x1="1385.5" y1="372" x2="1385.5" y2="486.5" stroke="rgba(240,250,255,0.16)" stroke-width="1"/>
<text x="1385.60" y="503.70" font-size="11.5" fill="#c7c8d0" text-anchor="middle" textLength="29.36" lengthAdjust="spacingAndGlyphs" >17:11</text>
<line x1="1462.5" y1="372" x2="1462.5" y2="486.5" stroke="rgba(240,250,255,0.16)" stroke-width="1"/>
<text x="1462.80" y="503.70" font-size="11.5" fill="#c7c8d0" text-anchor="middle" textLength="29.36" lengthAdjust="spacingAndGlyphs" >17:12</text>
<line x1="1540.5" y1="372" x2="1540.5" y2="486.5" stroke="rgba(240,250,255,0.16)" stroke-width="1"/>
<text x="1540.00" y="503.70" font-size="11.5" fill="#c7c8d0" text-anchor="middle" textLength="29.36" lengthAdjust="spacingAndGlyphs" >17:13</text>
<line x1="1617.5" y1="372" x2="1617.5" y2="486.5" stroke="rgba(240,250,255,0.16)" stroke-width="1"/>
<text x="1617.20" y="503.70" font-size="11.5" fill="#c7c8d0" text-anchor="middle" textLength="29.36" lengthAdjust="spacingAndGlyphs" >17:14</text>
<line x1="1694.5" y1="372" x2="1694.5" y2="486.5" stroke="rgba(240,250,255,0.16)" stroke-width="1"/>
<text x="1694.40" y="503.70" font-size="11.5" fill="#c7c8d0" text-anchor="middle" textLength="29.36" lengthAdjust="spacingAndGlyphs" >17:15</text>
<line x1="1244.2" y1="485.6" x2="1733.00" y2="485.6" stroke="#72A663" stroke-width="1.5"/>
<polyline points="1244.07,424.56 1256.93,415.92 1269.80,427.12 1282.67,413.37 1295.53,414.50 1308.40,387.99 1321.27,413.37 1334.13,405.57 1347.00,403.16 1359.87,410.81 1372.73,414.50 1385.60,387.71 1398.47,402.73 1411.33,409.96 1424.20,410.53 1437.07,416.48 1449.93,411.95 1462.80,387.28 1475.67,406.28 1488.53,408.83 1501.40,419.89 1514.27,412.23 1527.13,413.37 1540.00,389.13 1552.87,425.13 1565.73,412.66 1578.60,413.37 1591.47,412.23 1604.33,411.38 1617.20,390.26 1630.07,410.25 1642.93,405.43 1655.80,419.89 1668.67,414.36 1681.53,414.36 1694.40,385.58 1707.27,425.13 1720.13,383.74 1733.00,414.64" fill="none" stroke="#EAB839" stroke-width="1.35" stroke-linejoin="miter"/>
<rect x="1206.00" y="522.5" width="14" height="4" rx="1" fill="#7EB26D"/>
<text x="1228.40" y="527.70" font-size="12" fill="#c7c8d0" text-anchor="start" textLength="27.43" lengthAdjust="spacingAndGlyphs" >Read</text>
<text x="1261.83" y="527.70" font-size="12" fill="#c7c8d0" text-anchor="start" textLength="64.62" lengthAdjust="spacingAndGlyphs" >Max: 0 kB/s</text>
<text x="1332.45" y="527.70" font-size="12" fill="#c7c8d0" text-anchor="start" textLength="61.93" lengthAdjust="spacingAndGlyphs" >Avg: 0 kB/s</text>
<rect x="1403.98" y="522.5" width="14" height="4" rx="1" fill="#EAB839"/>
<text x="1426.38" y="527.70" font-size="12" fill="#c7c8d0" text-anchor="start" textLength="28.38" lengthAdjust="spacingAndGlyphs" >Write</text>
<text x="1460.76" y="527.70" font-size="12" fill="#c7c8d0" text-anchor="start" textLength="81.73" lengthAdjust="spacingAndGlyphs" >Max: 71.6 kB/s</text>
<text x="1548.49" y="527.70" font-size="12" fill="#c7c8d0" text-anchor="start" textLength="79.04" lengthAdjust="spacingAndGlyphs" >Avg: 53.9 kB/s</text>
<rect x="598.5" y="550.5" width="581" height="409" rx="2" fill="#181b1f" stroke="#25272c" stroke-width="1"/>
<text x="889.00" y="572.00" font-size="15" fill="#dcdde3" stroke="#dcdde3" stroke-width="0.45" text-anchor="middle" textLength="130.95" lengthAdjust="spacingAndGlyphs" >Per Disk Throughput</text>
<line x1="670.2" y1="600.5" x2="1154.8" y2="600.5" stroke="rgba(240,250,255,0.16)" stroke-width="1"/>
<text x="664.70" y="602.70" font-size="11.5" fill="#c7c8d0" text-anchor="end" textLength="29.79" lengthAdjust="spacingAndGlyphs" >0.125</text>
<line x1="670.2" y1="642.5" x2="1154.8" y2="642.5" stroke="rgba(240,250,255,0.16)" stroke-width="1"/>
<text x="664.70" y="644.70" font-size="11.5" fill="#c7c8d0" text-anchor="end" textLength="29.79" lengthAdjust="spacingAndGlyphs" >0.100</text>
<line x1="670.2" y1="685.5" x2="1154.8" y2="685.5" stroke="rgba(240,250,255,0.16)" stroke-width="1"/>
<text x="664.70" y="687.70" font-size="11.5" fill="#c7c8d0" text-anchor="end" textLength="36.47" lengthAdjust="spacingAndGlyphs" >0.0750</text>
<line x1="670.2" y1="728.5" x2="1154.8" y2="728.5" stroke="rgba(240,250,255,0.16)" stroke-width="1"/>
<text x="664.70" y="730.70" font-size="11.5" fill="#c7c8d0" text-anchor="end" textLength="36.47" lengthAdjust="spacingAndGlyphs" >0.0500</text>
<line x1="670.2" y1="771.5" x2="1154.8" y2="771.5" stroke="rgba(240,250,255,0.16)" stroke-width="1"/>
<text x="664.70" y="773.70" font-size="11.5" fill="#c7c8d0" text-anchor="end" textLength="36.47" lengthAdjust="spacingAndGlyphs" >0.0250</text>
<line x1="670.2" y1="813.5" x2="1154.8" y2="813.5" stroke="rgba(240,250,255,0.16)" stroke-width="1"/>
<text x="664.70" y="815.70" font-size="11.5" fill="#c7c8d0" text-anchor="end" textLength="6.68" lengthAdjust="spacingAndGlyphs" >0</text>
<line x1="732.5" y1="600" x2="732.5" y2="815.5" stroke="rgba(240,250,255,0.16)" stroke-width="1"/>
<text x="732.50" y="832.70" font-size="11.5" fill="#c7c8d0" text-anchor="middle" textLength="29.36" lengthAdjust="spacingAndGlyphs" >17:10</text>
<line x1="807.5" y1="600" x2="807.5" y2="815.5" stroke="rgba(240,250,255,0.16)" stroke-width="1"/>
<text x="807.30" y="832.70" font-size="11.5" fill="#c7c8d0" text-anchor="middle" textLength="29.36" lengthAdjust="spacingAndGlyphs" >17:11</text>
<line x1="882.5" y1="600" x2="882.5" y2="815.5" stroke="rgba(240,250,255,0.16)" stroke-width="1"/>
<text x="882.10" y="832.70" font-size="11.5" fill="#c7c8d0" text-anchor="middle" textLength="29.36" lengthAdjust="spacingAndGlyphs" >17:12</text>
<line x1="956.5" y1="600" x2="956.5" y2="815.5" stroke="rgba(240,250,255,0.16)" stroke-width="1"/>
<text x="956.90" y="832.70" font-size="11.5" fill="#c7c8d0" text-anchor="middle" textLength="29.36" lengthAdjust="spacingAndGlyphs" >17:13</text>
<line x1="1031.5" y1="600" x2="1031.5" y2="815.5" stroke="rgba(240,250,255,0.16)" stroke-width="1"/>
<text x="1031.70" y="832.70" font-size="11.5" fill="#c7c8d0" text-anchor="middle" textLength="29.36" lengthAdjust="spacingAndGlyphs" >17:14</text>
<line x1="1106.5" y1="600" x2="1106.5" y2="815.5" stroke="rgba(240,250,255,0.16)" stroke-width="1"/>
<text x="1106.50" y="832.70" font-size="11.5" fill="#c7c8d0" text-anchor="middle" textLength="29.36" lengthAdjust="spacingAndGlyphs" >17:15</text>
<polygon points="1094.03,813.8 1106.50,642.5 1118.97,813.8" fill="rgba(182,152,166,0.55)"/>
<polyline points="1094.03,813.6 1106.50,642.5 1118.97,813.6" fill="none" stroke="rgba(200,175,200,0.35)" stroke-width="3"/>
<polyline points="670.2,813.6 1094.03,813.6 1106.50,642.5 1118.97,813.6 1143.90,813.6" fill="none" stroke="#b4a6dc" stroke-width="1.3"/>
<line x1="670.2" y1="813.6" x2="1143.90" y2="813.6" stroke="#d9b0e6" stroke-width="2"/>
<text x="0" y="0" font-size="12" fill="#c7c8d0" text-anchor="middle" transform="translate(619.6 713.4) rotate(-90)" textLength="30" lengthAdjust="spacingAndGlyphs">ops/s</text>
<rect x="616.80" y="851" width="14" height="4" rx="1" fill="#7EB26D"/>
<text x="639.20" y="856.20" font-size="12" fill="#c7c8d0" text-anchor="start" textLength="32.28" lengthAdjust="spacingAndGlyphs" >sdb-w</text>
<text x="677.48" y="856.20" font-size="12" fill="#c7c8d0" text-anchor="start" textLength="33.77" lengthAdjust="spacingAndGlyphs" >Avg: 0</text>
<rect x="720.84" y="851" width="14" height="4" rx="1" fill="#EAB839"/>
<text x="743.24" y="856.20" font-size="12" fill="#c7c8d0" text-anchor="start" textLength="31.82" lengthAdjust="spacingAndGlyphs" >sdc-w</text>
<text x="781.06" y="856.20" font-size="12" fill="#c7c8d0" text-anchor="start" textLength="33.77" lengthAdjust="spacingAndGlyphs" >Avg: 0</text>
<rect x="824.43" y="851" width="14" height="4" rx="1" fill="#6ED0E0"/>
<text x="846.83" y="856.20" font-size="12" fill="#c7c8d0" text-anchor="start" textLength="32.30" lengthAdjust="spacingAndGlyphs" >sdd-w</text>
<text x="885.13" y="856.20" font-size="12" fill="#c7c8d0" text-anchor="start" textLength="33.77" lengthAdjust="spacingAndGlyphs" >Avg: 0</text>
<rect x="928.50" y="851" width="14" height="4" rx="1" fill="#EF843C"/>
<text x="950.90" y="856.20" font-size="12" fill="#c7c8d0" text-anchor="start" textLength="31.89" lengthAdjust="spacingAndGlyphs" >sde-w</text>
<text x="988.79" y="856.20" font-size="12" fill="#c7c8d0" text-anchor="start" textLength="33.77" lengthAdjust="spacingAndGlyphs" >Avg: 0</text>
<rect x="1032.15" y="851" width="14" height="4" rx="1" fill="#E24D42"/>
<text x="1054.55" y="856.20" font-size="12" fill="#c7c8d0" text-anchor="start" textLength="29.68" lengthAdjust="spacingAndGlyphs" >sdf-w</text>
<text x="1090.23" y="856.20" font-size="12" fill="#c7c8d0" text-anchor="start" textLength="33.77" lengthAdjust="spacingAndGlyphs" >Avg: 0</text>
<rect x="616.80" y="869" width="14" height="4" rx="1" fill="#1F78C1"/>
<text x="639.20" y="874.20" font-size="12" fill="#c7c8d0" text-anchor="start" textLength="32.27" lengthAdjust="spacingAndGlyphs" >sdg-w</text>
<text x="677.47" y="874.20" font-size="12" fill="#c7c8d0" text-anchor="start" textLength="33.77" lengthAdjust="spacingAndGlyphs" >Avg: 0</text>
<rect x="720.84" y="869" width="14" height="4" rx="1" fill="#BA43A9"/>
<text x="743.24" y="874.20" font-size="12" fill="#c7c8d0" text-anchor="start" textLength="27.28" lengthAdjust="spacingAndGlyphs" >sdb-r</text>
<text x="776.52" y="874.20" font-size="12" fill="#c7c8d0" text-anchor="start" textLength="71.77" lengthAdjust="spacingAndGlyphs" >Avg: 0.00256</text>
<rect x="857.89" y="869" width="14" height="4" rx="1" fill="#705DA0"/>
<text x="880.29" y="874.20" font-size="12" fill="#c7c8d0" text-anchor="start" textLength="26.82" lengthAdjust="spacingAndGlyphs" >sdc-r</text>
<text x="913.12" y="874.20" font-size="12" fill="#c7c8d0" text-anchor="start" textLength="71.77" lengthAdjust="spacingAndGlyphs" >Avg: 0.00256</text>
<rect x="994.49" y="869" width="14" height="4" rx="1" fill="#508642"/>
<text x="1016.89" y="874.20" font-size="12" fill="#c7c8d0" text-anchor="start" textLength="27.31" lengthAdjust="spacingAndGlyphs" >sdd-r</text>
<text x="1050.19" y="874.20" font-size="12" fill="#c7c8d0" text-anchor="start" textLength="71.77" lengthAdjust="spacingAndGlyphs" >Avg: 0.00256</text>
<rect x="616.80" y="887" width="14" height="4" rx="1" fill="#CCA300"/>
<text x="639.20" y="892.20" font-size="12" fill="#c7c8d0" text-anchor="start" textLength="26.89" lengthAdjust="spacingAndGlyphs" >sde-r</text>
<text x="672.09" y="892.20" font-size="12" fill="#c7c8d0" text-anchor="start" textLength="71.77" lengthAdjust="spacingAndGlyphs" >Avg: 0.00256</text>
<rect x="753.47" y="887" width="14" height="4" rx="1" fill="#447EBC"/>
<text x="775.87" y="892.20" font-size="12" fill="#c7c8d0" text-anchor="start" textLength="24.68" lengthAdjust="spacingAndGlyphs" >sdf-r</text>
<text x="806.55" y="892.20" font-size="12" fill="#c7c8d0" text-anchor="start" textLength="71.77" lengthAdjust="spacingAndGlyphs" >Avg: 0.00256</text>
<rect x="887.92" y="887" width="14" height="4" rx="1" fill="#C15C17"/>
<text x="910.32" y="892.20" font-size="12" fill="#c7c8d0" text-anchor="start" textLength="27.28" lengthAdjust="spacingAndGlyphs" >sdg-r</text>
<text x="943.60" y="892.20" font-size="12" fill="#c7c8d0" text-anchor="start" textLength="71.77" lengthAdjust="spacingAndGlyphs" >Avg: 0.00256</text>
<rect x="1024.97" y="887" width="14" height="4" rx="1" fill="#890F02"/>
<text x="1047.37" y="892.20" font-size="12" fill="#c7c8d0" text-anchor="start" textLength="27.16" lengthAdjust="spacingAndGlyphs" >sdh-r</text>
<text x="1080.53" y="892.20" font-size="12" fill="#c7c8d0" text-anchor="start" textLength="71.77" lengthAdjust="spacingAndGlyphs" >Avg: 0.00256</text>
<rect x="616.80" y="905" width="14" height="4" rx="1" fill="#0A437C"/>
<text x="639.20" y="910.20" font-size="12" fill="#c7c8d0" text-anchor="start" textLength="23.43" lengthAdjust="spacingAndGlyphs" >sdi-r</text>
<text x="668.63" y="910.20" font-size="12" fill="#c7c8d0" text-anchor="start" textLength="71.77" lengthAdjust="spacingAndGlyphs" >Avg: 0.00256</text>
<rect x="750.00" y="905" width="14" height="4" rx="1" fill="#6D1F62"/>
<text x="772.40" y="910.20" font-size="12" fill="#c7c8d0" text-anchor="start" textLength="23.38" lengthAdjust="spacingAndGlyphs" >sdj-r</text>
<text x="801.79" y="910.20" font-size="12" fill="#c7c8d0" text-anchor="start" textLength="71.77" lengthAdjust="spacingAndGlyphs" >Avg: 0.00256</text>
<rect x="883.16" y="905" width="14" height="4" rx="1" fill="#584477"/>
<text x="905.56" y="910.20" font-size="12" fill="#c7c8d0" text-anchor="start" textLength="26.63" lengthAdjust="spacingAndGlyphs" >sdk-r</text>
<text x="938.19" y="910.20" font-size="12" fill="#c7c8d0" text-anchor="start" textLength="71.77" lengthAdjust="spacingAndGlyphs" >Avg: 0.00256</text>
<rect x="1019.57" y="905" width="14" height="4" rx="1" fill="#B7DBAB"/>
<text x="1041.97" y="910.20" font-size="12" fill="#c7c8d0" text-anchor="start" textLength="23.43" lengthAdjust="spacingAndGlyphs" >sdl-r</text>
<text x="1071.40" y="910.20" font-size="12" fill="#c7c8d0" text-anchor="start" textLength="71.77" lengthAdjust="spacingAndGlyphs" >Avg: 0.00256</text>
<rect x="616.80" y="923" width="14" height="4" rx="1" fill="#F4D598"/>
<text x="639.20" y="928.20" font-size="12" fill="#c7c8d0" text-anchor="start" textLength="32.15" lengthAdjust="spacingAndGlyphs" >sdh-w</text>
<text x="677.35" y="928.20" font-size="12" fill="#c7c8d0" text-anchor="start" textLength="33.77" lengthAdjust="spacingAndGlyphs" >Avg: 0</text>
<rect x="720.72" y="923" width="14" height="4" rx="1" fill="#70DBED"/>
<text x="743.12" y="928.20" font-size="12" fill="#c7c8d0" text-anchor="start" textLength="28.43" lengthAdjust="spacingAndGlyphs" >sdi-w</text>
<text x="777.54" y="928.20" font-size="12" fill="#c7c8d0" text-anchor="start" textLength="33.77" lengthAdjust="spacingAndGlyphs" >Avg: 0</text>
<rect x="820.91" y="923" width="14" height="4" rx="1" fill="#F9BA8F"/>
<text x="843.31" y="928.20" font-size="12" fill="#c7c8d0" text-anchor="start" textLength="28.38" lengthAdjust="spacingAndGlyphs" >sdj-w</text>
<text x="877.69" y="928.20" font-size="12" fill="#c7c8d0" text-anchor="start" textLength="33.77" lengthAdjust="spacingAndGlyphs" >Avg: 0</text>
<rect x="921.06" y="923" width="14" height="4" rx="1" fill="#F29191"/>
<text x="943.46" y="928.20" font-size="12" fill="#c7c8d0" text-anchor="start" textLength="31.63" lengthAdjust="spacingAndGlyphs" >sdk-w</text>
<text x="981.09" y="928.20" font-size="12" fill="#c7c8d0" text-anchor="start" textLength="33.77" lengthAdjust="spacingAndGlyphs" >Avg: 0</text>
<rect x="1024.45" y="923" width="14" height="4" rx="1" fill="#82B5D8"/>
<text x="1046.85" y="928.20" font-size="12" fill="#c7c8d0" text-anchor="start" textLength="28.43" lengthAdjust="spacingAndGlyphs" >sdl-w</text>
<text x="1081.28" y="928.20" font-size="12" fill="#c7c8d0" text-anchor="start" textLength="33.77" lengthAdjust="spacingAndGlyphs" >Avg: 0</text>
<rect x="616.80" y="941" width="14" height="4" rx="1" fill="#E5A8E2"/>
<text x="639.20" y="946.20" font-size="12" fill="#c7c8d0" text-anchor="start" textLength="44.83" lengthAdjust="spacingAndGlyphs" >Mean-W</text>
<text x="690.03" y="946.20" font-size="12" fill="#c7c8d0" text-anchor="start" textLength="33.77" lengthAdjust="spacingAndGlyphs" >Avg: 0</text>
<rect x="733.40" y="941" width="14" height="4" rx="1" fill="#AEA2E0"/>
<text x="755.80" y="946.20" font-size="12" fill="#c7c8d0" text-anchor="start" textLength="41.46" lengthAdjust="spacingAndGlyphs" >Mean-R</text>
<text x="803.26" y="946.20" font-size="12" fill="#c7c8d0" text-anchor="start" textLength="71.77" lengthAdjust="spacingAndGlyphs" >Avg: 0.00256</text>
<rect x="1187.5" y="550.5" width="581" height="409" rx="2" fill="#181b1f" stroke="#25272c" stroke-width="1"/>
<text x="1478.00" y="572.00" font-size="15" fill="#dcdde3" stroke="#dcdde3" stroke-width="0.45" text-anchor="middle" textLength="95.27" lengthAdjust="spacingAndGlyphs" >Disk Utilization</text>
<line x1="1231" y1="617.5" x2="1743.7" y2="617.5" stroke="rgba(240,250,255,0.16)" stroke-width="1"/>
<text x="1225.50" y="619.70" font-size="11.5" fill="#c7c8d0" text-anchor="end" textLength="28.56" lengthAdjust="spacingAndGlyphs" >100%</text>
<line x1="1231" y1="664.5" x2="1743.7" y2="664.5" stroke="rgba(240,250,255,0.16)" stroke-width="1"/>
<text x="1225.50" y="666.70" font-size="11.5" fill="#c7c8d0" text-anchor="end" textLength="21.88" lengthAdjust="spacingAndGlyphs" >75%</text>
<line x1="1231" y1="710.5" x2="1743.7" y2="710.5" stroke="rgba(240,250,255,0.16)" stroke-width="1"/>
<text x="1225.50" y="712.70" font-size="11.5" fill="#c7c8d0" text-anchor="end" textLength="21.88" lengthAdjust="spacingAndGlyphs" >50%</text>
<line x1="1231" y1="756.5" x2="1743.7" y2="756.5" stroke="rgba(240,250,255,0.16)" stroke-width="1"/>
<text x="1225.50" y="758.70" font-size="11.5" fill="#c7c8d0" text-anchor="end" textLength="21.88" lengthAdjust="spacingAndGlyphs" >25%</text>
<line x1="1231" y1="801.5" x2="1743.7" y2="801.5" stroke="rgba(240,250,255,0.16)" stroke-width="1"/>
<text x="1225.50" y="803.70" font-size="11.5" fill="#c7c8d0" text-anchor="end" textLength="15.19" lengthAdjust="spacingAndGlyphs" >0%</text>
<line x1="1296.5" y1="600.4" x2="1296.5" y2="802.2" stroke="rgba(240,250,255,0.16)" stroke-width="1"/>
<text x="1296.30" y="819.40" font-size="11.5" fill="#c7c8d0" text-anchor="middle" textLength="29.36" lengthAdjust="spacingAndGlyphs" >17:10</text>
<line x1="1375.5" y1="600.4" x2="1375.5" y2="802.2" stroke="rgba(240,250,255,0.16)" stroke-width="1"/>
<text x="1375.54" y="819.40" font-size="11.5" fill="#c7c8d0" text-anchor="middle" textLength="29.36" lengthAdjust="spacingAndGlyphs" >17:11</text>
<line x1="1454.5" y1="600.4" x2="1454.5" y2="802.2" stroke="rgba(240,250,255,0.16)" stroke-width="1"/>
<text x="1454.78" y="819.40" font-size="11.5" fill="#c7c8d0" text-anchor="middle" textLength="29.36" lengthAdjust="spacingAndGlyphs" >17:12</text>
<line x1="1534.5" y1="600.4" x2="1534.5" y2="802.2" stroke="rgba(240,250,255,0.16)" stroke-width="1"/>
<text x="1534.02" y="819.40" font-size="11.5" fill="#c7c8d0" text-anchor="middle" textLength="29.36" lengthAdjust="spacingAndGlyphs" >17:13</text>
<line x1="1613.5" y1="600.4" x2="1613.5" y2="802.2" stroke="rgba(240,250,255,0.16)" stroke-width="1"/>
<text x="1613.26" y="819.40" font-size="11.5" fill="#c7c8d0" text-anchor="middle" textLength="29.36" lengthAdjust="spacingAndGlyphs" >17:14</text>
<line x1="1692.5" y1="600.4" x2="1692.5" y2="802.2" stroke="rgba(240,250,255,0.16)" stroke-width="1"/>
<text x="1692.50" y="819.40" font-size="11.5" fill="#c7c8d0" text-anchor="middle" textLength="29.36" lengthAdjust="spacingAndGlyphs" >17:15</text>
<line x1="1231" y1="801.3" x2="1732.12" y2="801.3" stroke="#B04A1E" stroke-width="1.6"/>
<clipPath id="duclip"><rect x="1188" y="828" width="580" height="123"/></clipPath><g clip-path="url(#duclip)">
<rect x="1205.60" y="839" width="14" height="4" rx="1" fill="#7EB26D"/>
<text x="1228.00" y="844.20" font-size="12" fill="#c7c8d0" text-anchor="start" textLength="19.64" lengthAdjust="spacingAndGlyphs" >sda</text>
<text x="1253.64" y="844.20" font-size="12" fill="#c7c8d0" text-anchor="start" textLength="76.37" lengthAdjust="spacingAndGlyphs" >Max: 0.0400%</text>
<text x="1336.01" y="844.20" font-size="12" fill="#c7c8d0" text-anchor="start" textLength="80.64" lengthAdjust="spacingAndGlyphs" >Avg: 0.00103%</text>
<rect x="1426.25" y="839" width="14" height="4" rx="1" fill="#EAB839"/>
<text x="1448.65" y="844.20" font-size="12" fill="#c7c8d0" text-anchor="start" textLength="19.84" lengthAdjust="spacingAndGlyphs" >sdb</text>
<text x="1474.49" y="844.20" font-size="12" fill="#c7c8d0" text-anchor="start" textLength="76.37" lengthAdjust="spacingAndGlyphs" >Max: 0.0400%</text>
<text x="1556.86" y="844.20" font-size="12" fill="#c7c8d0" text-anchor="start" textLength="80.64" lengthAdjust="spacingAndGlyphs" >Avg: 0.00103%</text>
<rect x="1205.60" y="857" width="14" height="4" rx="1" fill="#6ED0E0"/>
<text x="1228.00" y="862.20" font-size="12" fill="#c7c8d0" text-anchor="start" textLength="19.38" lengthAdjust="spacingAndGlyphs" >sdc</text>
<text x="1253.38" y="862.20" font-size="12" fill="#c7c8d0" text-anchor="start" textLength="76.37" lengthAdjust="spacingAndGlyphs" >Max: 0.0400%</text>
<text x="1335.75" y="862.20" font-size="12" fill="#c7c8d0" text-anchor="start" textLength="80.64" lengthAdjust="spacingAndGlyphs" >Avg: 0.00103%</text>
<rect x="1425.99" y="857" width="14" height="4" rx="1" fill="#EF843C"/>
<text x="1448.39" y="862.20" font-size="12" fill="#c7c8d0" text-anchor="start" textLength="19.87" lengthAdjust="spacingAndGlyphs" >sdd</text>
<text x="1474.26" y="862.20" font-size="12" fill="#c7c8d0" text-anchor="start" textLength="76.37" lengthAdjust="spacingAndGlyphs" >Max: 0.0400%</text>
<text x="1556.62" y="862.20" font-size="12" fill="#c7c8d0" text-anchor="start" textLength="80.64" lengthAdjust="spacingAndGlyphs" >Avg: 0.00103%</text>
<rect x="1205.60" y="875" width="14" height="4" rx="1" fill="#E24D42"/>
<text x="1228.00" y="880.20" font-size="12" fill="#c7c8d0" text-anchor="start" textLength="19.45" lengthAdjust="spacingAndGlyphs" >sde</text>
<text x="1253.45" y="880.20" font-size="12" fill="#c7c8d0" text-anchor="start" textLength="76.37" lengthAdjust="spacingAndGlyphs" >Max: 0.0400%</text>
<text x="1335.82" y="880.20" font-size="12" fill="#c7c8d0" text-anchor="start" textLength="80.64" lengthAdjust="spacingAndGlyphs" >Avg: 0.00103%</text>
<rect x="1426.06" y="875" width="14" height="4" rx="1" fill="#1F78C1"/>
<text x="1448.46" y="880.20" font-size="12" fill="#c7c8d0" text-anchor="start" textLength="17.24" lengthAdjust="spacingAndGlyphs" >sdf</text>
<text x="1471.71" y="880.20" font-size="12" fill="#c7c8d0" text-anchor="start" textLength="76.37" lengthAdjust="spacingAndGlyphs" >Max: 0.0400%</text>
<text x="1554.08" y="880.20" font-size="12" fill="#c7c8d0" text-anchor="start" textLength="80.64" lengthAdjust="spacingAndGlyphs" >Avg: 0.00103%</text>
<rect x="1205.60" y="893" width="14" height="4" rx="1" fill="#BA43A9"/>
<text x="1228.00" y="898.20" font-size="12" fill="#c7c8d0" text-anchor="start" textLength="19.84" lengthAdjust="spacingAndGlyphs" >sdg</text>
<text x="1253.84" y="898.20" font-size="12" fill="#c7c8d0" text-anchor="start" textLength="76.37" lengthAdjust="spacingAndGlyphs" >Max: 0.0400%</text>
<text x="1336.20" y="898.20" font-size="12" fill="#c7c8d0" text-anchor="start" textLength="80.64" lengthAdjust="spacingAndGlyphs" >Avg: 0.00103%</text>
<rect x="1426.45" y="893" width="14" height="4" rx="1" fill="#705DA0"/>
<text x="1448.85" y="898.20" font-size="12" fill="#c7c8d0" text-anchor="start" textLength="19.71" lengthAdjust="spacingAndGlyphs" >sdh</text>
<text x="1474.56" y="898.20" font-size="12" fill="#c7c8d0" text-anchor="start" textLength="76.37" lengthAdjust="spacingAndGlyphs" >Max: 0.0400%</text>
<text x="1556.93" y="898.20" font-size="12" fill="#c7c8d0" text-anchor="start" textLength="80.64" lengthAdjust="spacingAndGlyphs" >Avg: 0.00103%</text>
<rect x="1205.60" y="911" width="14" height="4" rx="1" fill="#508642"/>
<text x="1228.00" y="916.20" font-size="12" fill="#c7c8d0" text-anchor="start" textLength="15.99" lengthAdjust="spacingAndGlyphs" >sdi</text>
<text x="1249.99" y="916.20" font-size="12" fill="#c7c8d0" text-anchor="start" textLength="76.37" lengthAdjust="spacingAndGlyphs" >Max: 0.0400%</text>
<text x="1332.36" y="916.20" font-size="12" fill="#c7c8d0" text-anchor="start" textLength="80.64" lengthAdjust="spacingAndGlyphs" >Avg: 0.00103%</text>
<rect x="1422.60" y="911" width="14" height="4" rx="1" fill="#CCA300"/>
<text x="1445.00" y="916.20" font-size="12" fill="#c7c8d0" text-anchor="start" textLength="15.94" lengthAdjust="spacingAndGlyphs" >sdj</text>
<text x="1466.94" y="916.20" font-size="12" fill="#c7c8d0" text-anchor="start" textLength="76.37" lengthAdjust="spacingAndGlyphs" >Max: 0.0400%</text>
<text x="1549.31" y="916.20" font-size="12" fill="#c7c8d0" text-anchor="start" textLength="80.64" lengthAdjust="spacingAndGlyphs" >Avg: 0.00103%</text>
<rect x="1205.60" y="929" width="14" height="4" rx="1" fill="#447EBC"/>
<text x="1228.00" y="934.20" font-size="12" fill="#c7c8d0" text-anchor="start" textLength="19.19" lengthAdjust="spacingAndGlyphs" >sdk</text>
<text x="1253.19" y="934.20" font-size="12" fill="#c7c8d0" text-anchor="start" textLength="76.37" lengthAdjust="spacingAndGlyphs" >Max: 0.0400%</text>
<text x="1335.56" y="934.20" font-size="12" fill="#c7c8d0" text-anchor="start" textLength="80.64" lengthAdjust="spacingAndGlyphs" >Avg: 0.00103%</text>
<rect x="1425.80" y="929" width="14" height="4" rx="1" fill="#C15C17"/>
<text x="1448.20" y="934.20" font-size="12" fill="#c7c8d0" text-anchor="start" textLength="15.99" lengthAdjust="spacingAndGlyphs" >sdl</text>
<text x="1470.19" y="934.20" font-size="12" fill="#c7c8d0" text-anchor="start" textLength="76.37" lengthAdjust="spacingAndGlyphs" >Max: 0.0400%</text>
<text x="1552.56" y="934.20" font-size="12" fill="#c7c8d0" text-anchor="start" textLength="80.64" lengthAdjust="spacingAndGlyphs" >Avg: 0.00103%</text>
<rect x="1205.60" y="947" width="14" height="4" rx="1" fill="#890F02"/>
<text x="1228.00" y="952.20" font-size="12" fill="#c7c8d0" text-anchor="start" textLength="30.49" lengthAdjust="spacingAndGlyphs" >Mean</text>
<text x="1264.49" y="952.20" font-size="12" fill="#c7c8d0" text-anchor="start" textLength="76.37" lengthAdjust="spacingAndGlyphs" >Max: 0.0400%</text>
<text x="1346.85" y="952.20" font-size="12" fill="#c7c8d0" text-anchor="start" textLength="80.64" lengthAdjust="spacingAndGlyphs" >Avg: 0.00103%</text>
</g>
</svg>
</body></html>
